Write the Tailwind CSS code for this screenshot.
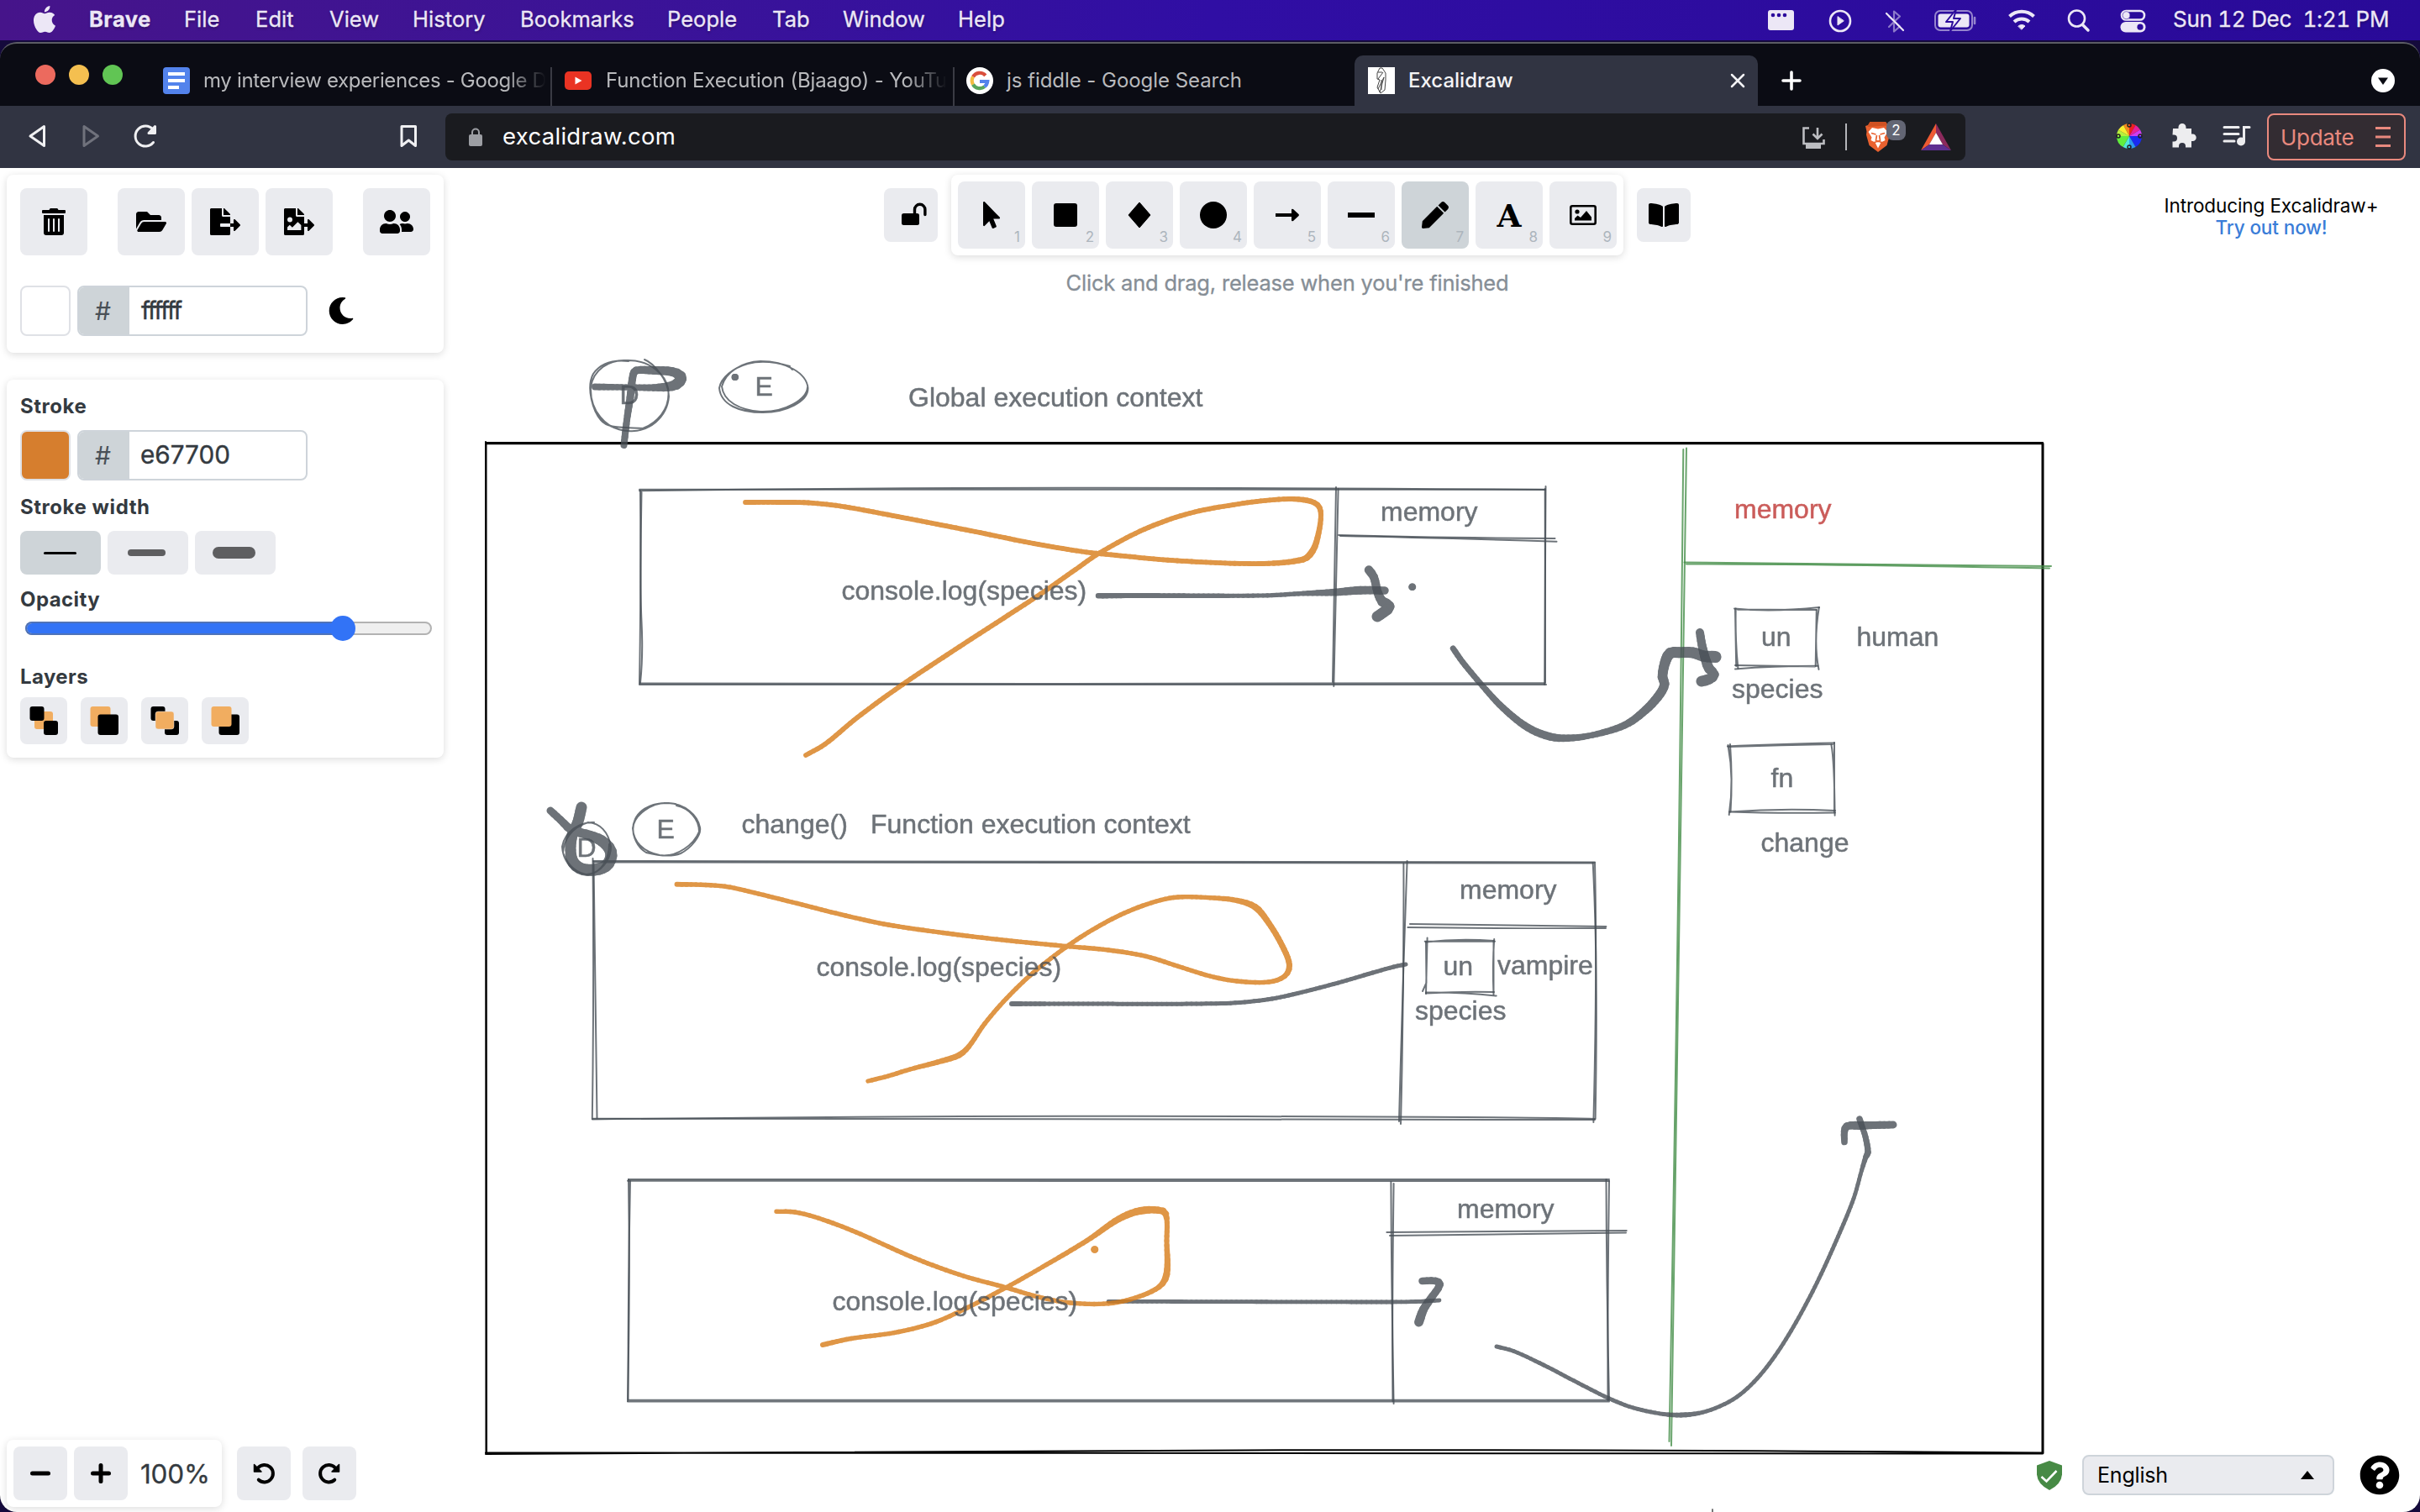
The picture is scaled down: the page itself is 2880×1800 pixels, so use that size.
<!DOCTYPE html>
<html lang="en">
<head>
<meta charset="utf-8">
<title>Excalidraw</title>
<script src="https://cdn.jsdelivr.net/npm/@tailwindcss/browser@4"></script>
</head>
<body class="w-[2880px] h-[1800px] overflow-hidden bg-[#140a26] font-[Inter,sans-serif] antialiased flex flex-col">

<!-- macOS menu bar -->
<header class="relative h-12 shrink-0 flex items-center justify-between bg-linear-to-r from-[#46148a] via-[#300ea4] to-[#290a98] text-[#ece7f6] text-[25.5px] leading-[46px] [text-shadow:0_2px_3px_rgba(0,0,0,.3)]">
  <nav class="flex items-center h-full pb-[2px] whitespace-nowrap tracking-[0.05px] [-webkit-text-stroke:0.3px_#ece7f6]">
    <div class="w-[106px] pl-[37px]"><svg class="w-8 h-8" viewBox="0 0 24 24" fill="#ece7f6"><path d="M12.152 6.896c-.948 0-2.415-1.078-3.96-1.04-2.04.027-3.91 1.183-4.961 3.014-2.117 3.675-.546 9.103 1.519 12.09 1.013 1.454 2.208 3.09 3.792 3.039 1.52-.065 2.09-.987 3.935-.987 1.831 0 2.35.987 3.96.948 1.637-.026 2.676-1.48 3.676-2.948 1.156-1.688 1.636-3.325 1.662-3.415-.039-.013-3.182-1.221-3.22-4.857-.026-3.04 2.48-4.494 2.597-4.559-1.429-2.09-3.623-2.324-4.39-2.376-2-.156-3.675 1.09-4.61 1.09zM15.53 3.83c.843-1.012 1.4-2.427 1.245-3.83-1.207.052-2.662.805-3.532 1.818-.78.896-1.454 2.338-1.273 3.714 1.338.104 2.715-.688 3.559-1.701"/></svg></div>
    <span class="w-[113px] font-bold tracking-[0.5px]">Brave</span>
    <span class="w-[85px]">File</span>
    <span class="w-[88px]">Edit</span>
    <span class="w-[99px]">View</span>
    <span class="w-[128px]">History</span>
    <span class="w-[175px]">Bookmarks</span>
    <span class="w-[125px]">People</span>
    <span class="w-[84px]">Tab</span>
    <span class="w-[137px]">Window</span>
    <span>Help</span>
  </nav>
  <div class="flex items-center h-full pb-[2px] pr-[36px]">
    <svg class="w-[482px] h-[46px]" viewBox="2104 0 482 46" fill="none" stroke="#ece7f6" stroke-width="2.6" stroke-linecap="round" stroke-linejoin="round">
      <rect x="2104" y="12" width="31" height="24" rx="3" fill="#ece7f6" stroke="none"/>
      <g fill="#2c0b9c" stroke="none"><circle cx="2110" cy="18" r="2.3"/><circle cx="2117" cy="18" r="2.3"/><circle cx="2124" cy="18" r="2.3"/></g>
      <circle cx="2190" cy="25" r="12"/><path d="M2187 20v10l7-5z" fill="#ece7f6" stroke-width="1"/>
      <g stroke-width="2.2"><path d="M2248 19.500l13 12-7 6v-24l7 6-6 5.500M2248 32l5-5" opacity=".5"/><path d="M2245 16l20 20"/></g>
      <rect x="2303" y="13" width="44" height="23" rx="6" stroke-width="2" opacity=".55"/>
      <rect x="2306.500" y="16.500" width="37" height="16" rx="3" fill="#ece7f6" stroke="none"/>
      <path d="M2350 21v7" opacity=".55"/>
      <path d="M2328 11l-12 15h8l-3 11 12-15h-8z" fill="#ece7f6" stroke="#2c0b9c" stroke-width="2"/>
      <g stroke-width="4" stroke-linecap="butt"><path d="M2391.500 19.500a21 21 0 0 1 29 0"/><path d="M2397 26a13 13 0 0 1 18 0"/></g>
      <path d="M2402 31a6 6 0 0 1 8 0l-4 4z" fill="#ece7f6" stroke-width="1"/>
      <circle cx="2471.500" cy="22" r="9.500"/><path d="M2478.500 29.500l6.500 6.500" stroke-width="3.500"/>
      <rect x="2525" y="13" width="27" height="10.500" rx="5.200" stroke-width="2.600"/><circle cx="2530.500" cy="18.200" r="4.500" fill="#ece7f6" stroke="#2c0b9c" stroke-width="0.500"/>
      <rect x="2523.500" y="26" width="30" height="12.500" rx="6.200" fill="#ece7f6" stroke="none"/><circle cx="2547" cy="32.200" r="3.600" fill="#2c0b9c" stroke="none"/>
    </svg>
    <span class="w-[258px] whitespace-pre text-[26px] tabular-nums tracking-[-0.28px] [-webkit-text-stroke:0.3px_#ece7f6]">Sun 12 Dec  1:21 PM</span>
  </div>
</header>

<!-- Browser window -->
<main class="relative flex-1 flex flex-col bg-[#150a3c]">
<div class="mt-[2px] flex-1 flex flex-col rounded-[20px] overflow-hidden bg-[#0b0c14] border-t-2 border-[#5c5d64]">

  <!-- Tab strip -->
  <div class="h-[74px] shrink-0 flex items-end pb-0">
    <div class="h-[74px] w-[178px] pl-[42px] flex items-center gap-4 shrink-0">
      <i class="size-6 rounded-full bg-[#ec6a5e]"></i><i class="size-6 rounded-full bg-[#f4bf50]"></i><i class="size-6 rounded-full bg-[#61c554]"></i>
    </div>
    <div class="h-[60px] w-[479px] shrink-0 flex items-center pl-4 relative text-[#b9babd] text-[24px]">
      <svg class="size-8 shrink-0" viewBox="0 0 32 32"><rect width="32" height="32" rx="4" fill="#5383ec"/><path d="M6 6h20v4H6zM6 14h20v4H6zM6 22h13v4H6z" fill="#fff"/></svg>
      <span class="ml-4 whitespace-nowrap tracking-[-0.33px] [mask-image:linear-gradient(to_right,#000_88%,transparent)]">my interview experiences - Google D</span>
      <i class="absolute right-0 bottom-0 w-[2px] h-[46px] bg-[#3a3b44]"></i>
    </div>
    <div class="h-[60px] w-[479px] shrink-0 flex items-center pl-[15px] relative text-[#b9babd] text-[24px]">
      <svg class="w-8 h-[22px] shrink-0" viewBox="0 0 32 22"><rect width="32" height="22" rx="5" fill="#ea3323"/><path d="M12.500 6.500v9l8-4.500z" fill="#fff"/></svg>
      <span class="ml-[17px] whitespace-nowrap tracking-[-0.15px] [mask-image:linear-gradient(to_right,#000_88%,transparent)]">Function Execution (Bjaago) - YouTu</span>
      <i class="absolute right-0 bottom-0 w-[2px] h-[46px] bg-[#3a3b44]"></i>
    </div>
    <div class="h-[60px] w-[476px] shrink-0 flex items-center pl-[14px] text-[#b9babd] text-[24px]">
      <svg class="size-8 shrink-0" viewBox="0 0 32 32" fill="none" stroke-width="4.200"><circle cx="16" cy="16" r="16" fill="#fff"/>
        <path d="M22.800 9.800a9.200 9.200 0 0 0-14.800 1.600" stroke="#d94f3d"/><path d="M8 11.400a9.200 9.200 0 0 0 0 9.200" stroke="#f2bc42"/><path d="M8 20.600a9.200 9.200 0 0 0 13.700 2.600" stroke="#58a55c"/><path d="M21.700 23.200a9.200 9.200 0 0 0 3.500-6.200H16" stroke="#5383ec"/></svg>
      <span class="ml-4 whitespace-nowrap tracking-[-0.05px]">js fiddle - Google Search</span>
    </div>
    <div class="h-[60px] w-[480px] shrink-0 flex items-center pl-4 pr-[14px] rounded-t-[10px] bg-[#313442] text-[#f4f4f6] text-[24px]">
      <svg class="size-8 shrink-0" viewBox="0 0 32 32" fill="none" stroke="#444" stroke-width="1"><rect width="32" height="32" fill="#fff" stroke="none"/><path d="M14 1l-3 6v7l3 1-3 9 4 7 5-4 1-12v-8l-4-6zM12 6h5M12 14l6-8M12 26l7-14M14 30l5-18M16 15v12"/></svg>
      <span class="ml-[16px] flex-1 font-medium">Excalidraw</span>
      <svg class="size-5" viewBox="0 0 20 20" stroke="#f4f4f6" stroke-width="2.500" stroke-linecap="round"><path d="M3 3l14 14M17 3L3 17"/></svg>
    </div>
    <div class="h-[60px] flex-1 flex items-center justify-between pl-7 pr-[30px]">
      <svg class="size-6" viewBox="0 0 24 24" stroke="#fff" stroke-width="3.600" stroke-linecap="round"><path d="M12 2v20M2 12h20"/></svg>
      <svg class="size-7" viewBox="0 0 28 28"><circle cx="14" cy="14" r="14" fill="#fff"/><path d="M8 10.500h12l-6 8.500z" fill="#0b0c14"/></svg>
    </div>
  </div>

  <!-- Address bar -->
  <div class="h-[74px] shrink-0 bg-[#313442] flex items-center pt-0">
    <svg class="w-[530px] h-[74px] shrink-0" viewBox="0 126 530 74" fill="none" stroke="#f0f0f2" stroke-width="3" stroke-linejoin="round" stroke-linecap="round">
      <path d="M52.500 150.500v23L36 162z"/><path d="M100 150.500v23l16.500-11.500z" stroke="#70727c"/>
      <path d="M182.500 169.500a12 12 0 1 1-.5-15.500"/><path d="M184.500 150.500v8h-7.500z" fill="#f0f0f2"/>
      <path d="M478 150.500h16.500v23l-8.200-6.500-8.300 6.500z"/>
    </svg>
    <div class="h-14 w-[1809px] shrink-0 rounded-lg bg-[#1a1b1f] flex items-center justify-between pl-[28px] pr-[17px]">
      <div class="flex items-center">
        <svg class="w-4 h-[22px]" viewBox="0 0 16 22"><rect y="8" width="16" height="14" rx="2" fill="#9c9ea3"/><path d="M4 9V5.500a4 4 0 0 1 8 0V9" fill="none" stroke="#9c9ea3" stroke-width="2"/></svg>
        <span class="ml-6 text-white text-[27.5px] tracking-[0.3px]">excalidraw.com</span>
      </div>
      <svg class="w-[178px] h-[56px]" viewBox="2144 134 178 56" fill="none">
        <path d="M2153 151.500h-6.500v18.500h24v-5M2163 151v12M2157.500 158.500l5.500 5.500 5.500-5.500" stroke="#bcbdc1" stroke-width="2.600"/><path d="M2149 171h18v5h-18z" fill="#bcbdc1"/>
        <path d="M2197 146v32" stroke="#b4b5b9" stroke-width="2"/>
        <path d="M2225.500 144h18.500l3 4 3 1-1.500 6.500.5 4-3.500 12.500-10.500 8-10.500-8-3.500-12.500.5-4-1.500-6.500 3-1z" fill="#e9612f"/><path d="M2225.500 144h18.500l2.500 4.500-24 1.500z" fill="#cf5122"/>
        <path d="M2228 151l7 1.500 7-1.500 4.500 5-4 6.500 1 3.500-5 2.500-3.500 7-3.500-7-5-2.500 1-3.500-4-6.500z" fill="#fff"/>
        <path d="M2227 157.500l5.500 1.500M2243 157.500l-5.500 1.500M2233.500 160l-1 6 2.500 1.500 2.500-1.500-1-6M2229.500 169l5.500-2 5.500 2" stroke="#e9612f" stroke-width="1.700"/>
        <rect x="2245" y="142" width="23" height="24" rx="8" fill="#636674"/><text x="2256.500" y="160" text-anchor="middle" font-size="17" fill="#fff">2</text>
        <path d="M2304 146l-18 32 10-7 8-14z" fill="#ee5a33"/><path d="M2304 146l18 32-10-7-8-14z" fill="#8c2a5c"/><path d="M2286 178h36l-10-7h-16z" fill="#5e2f91"/><path d="M2304 157l-8 14h16z" fill="#fff"/>
      </svg>
    </div>
    <svg class="w-[359px] h-[74px] shrink-0" viewBox="2339 126 359 74">
      <g transform="translate(2534 162)">
        <path d="M0 0L-7-13A15 15 0 0 1 0-15z" fill="#f48a1c"/><path d="M0 0V-15A15 15 0 0 1 7.500-13z" fill="#f02020"/><path d="M0 0L7.500-13A15 15 0 0 1 13-7.500z" fill="#e8209a"/><path d="M0 0L13-7.500A15 15 0 0 1 15 0z" fill="#cf3df0"/><path d="M0 0H15A15 15 0 0 1 7.500 13z" fill="#1b2af0"/><path d="M0 0L7.500 13A15 15 0 0 1 0 15z" fill="#2c9af0"/><path d="M0 0V15A15 15 0 0 1-7.500 13z" fill="#50e8d8"/><path d="M0 0L-7.500 13A15 15 0 0 1-15 0z" fill="#62ee3c"/><path d="M0 0H-15A15 15 0 0 1-13-7.500z" fill="#b6f03c"/><path d="M0 0L-13-7.500A15 15 0 0 1-7-13z" fill="#f6ee30"/>
        <g fill="none" stroke="#222" stroke-width="1.500"><circle cy="-13" r="2"/><circle cy="13" r="2"/><circle cx="-13" r="2"/><circle cx="13" r="2"/></g>
      </g>
      <path d="M2586 153h6.500v-1.500a4.500 4.500 0 0 1 9 0v1.500h6.500v6.500h1.500a4.200 4.200 0 0 1 0 8.500h-1.500v7.500h-7v-1.500a4 4 0 0 0-8 0v1.500h-7.500v-7h1.500a4 4 0 0 0 0-8h-1.500z" fill="#ededef"/>
      <g stroke="#ededef" stroke-width="3" fill="none" stroke-linecap="round"><path d="M2647 151.500h17M2647 159.500h17M2647 168h12M2670.500 168v-16.500h6.500"/><circle cx="2667" cy="168.500" r="3.500" fill="#ededef"/></g>
    </svg>
    <div class="h-14 w-[165px] shrink-0 rounded-lg border-2 border-[#e9897e] bg-[#332c32] text-[#e9897e] flex items-center pl-[14px] gap-[24px]">
      <span class="text-[26px] w-[89px] tracking-[-0.3px]">Update</span>
      <svg class="w-[18px] h-[26px]" viewBox="0 0 18 26" stroke="#e9897e" stroke-width="3"><path d="M0 2.500h18M0 13h18M0 23.500h18"/></svg>
    </div>
  </div>

  <!-- Excalidraw -->
  <section class="relative h-[1600px] bg-white overflow-hidden">
    <svg id="board" class="absolute inset-0 w-[2880px] h-[1600px]" viewBox="0 200 2880 1600" fill="none" stroke-linecap="round" stroke-linejoin="round">
      <!-- outer frame -->
      <g stroke="#000" stroke-width="2">
        <path d="M578 527Q1500 526.500 2431 527M579 528.300H2430" /><path d="M2430.500 527V1730M2431.500 528V1730"/>
        <path d="M578 1731Q1100 1728 1480 1726.500T2431 1729.500M578 1729.500Q1500 1731 2431 1730.500"/><path d="M578 526Q580 1100 578.500 1730M578.500 528Q579.500 1200 579 1730"/>
      </g>
      <!-- green dividers -->
      <g stroke="#438d47" stroke-opacity=".8" stroke-width="2">
        <path d="M2003.300 535Q1997.700 1120 1986.500 1716"/><path d="M2007 533.500Q1996 1120 1989 1721"/>
        <path d="M2004.500 669.500Q2240 672 2441 674"/><path d="M2007 671.500Q2200 672 2439 676.500"/>
      </g>
      <!-- sketched boxes -->
      <g stroke="#495057" stroke-opacity=".8" stroke-width="2">
        <path d="M761 584.200Q1200 578 1839 583"/><path d="M761 582.800H1839"/><path d="M762 584Q763 700 761 814"/><path d="M763.500 586Q761.500 700 763.500 740T762 813"/><path d="M761 815Q1300 814 1840 815"/><path d="M762 813.500Q1300 814.500 1838 813.200"/><path d="M1839.500 579L1838.200 815"/><path d="M1838.700 582L1839 813"/>
        <path d="M1590 580L1586 812"/><path d="M1592.600 582L1587.300 817"/><path d="M1593 637Q1700 640 1850.500 641"/><path d="M1595 638Q1700 640 1852.500 644.700"/>
        <path d="M706 1025Q1300 1027.500 1898 1026.500"/><path d="M708 1026.500Q1300 1025.500 1896 1027.500"/><path d="M705.500 1022Q707 1180 704.800 1332"/><path d="M706.500 1026Q709 1180 710.500 1331"/><path d="M705 1332.500Q1100 1328 1480 1329T1898 1332"/><path d="M706 1331.800Q1300 1333.500 1898 1333"/><path d="M1895.700 1027Q1902 1150 1898.600 1332"/><path d="M1898 1027Q1901 1150 1896.400 1336"/>
        <path d="M1670.400 1028Q1671 1180 1667 1338"/><path d="M1674.600 1025Q1669 1180 1665 1335"/><path d="M1678 1100L1911.400 1103"/><path d="M1675.400 1104Q1800 1105.500 1911 1105"/>
        <path d="M748 1404H1915"/><path d="M747 1405.800Q1300 1405 1915 1406"/><path d="M748 1404Q750 1530 747 1668"/><path d="M750 1406Q747.500 1530 747.500 1666"/><path d="M747 1668.500Q1300 1667 1915 1668.500"/><path d="M748 1666.800H1914"/><path d="M1911.500 1404Q1912 1540 1915 1667"/><path d="M1915 1406Q1913 1540 1913.500 1667"/>
        <path d="M1655.400 1407Q1656 1540 1658.600 1671"/><path d="M1658.600 1409Q1656.500 1560 1657.500 1668"/><path d="M1650.400 1467Q1800 1465.500 1935.700 1465"/><path d="M1654 1471Q1800 1469.500 1935 1467.500"/>
        <path d="M2064 724.600Q2110 729 2165 723M2068 725.800Q2120 725.500 2161.500 726"/><path d="M2164.800 723Q2158 765 2164.500 797M2161.800 726L2160.700 793"/><path d="M2065 796.400Q2110 793 2163.300 792.800M2065 792L2160 793.600"/><path d="M2065.700 724.500Q2065 765 2068.400 795.700M2065 725.500L2066.200 793"/>
        <path d="M2056 888.600Q2110 886 2183 884.600M2058 889Q2120 887 2181 886"/><path d="M2056.500 887Q2064 928 2057.700 970M2059 886Q2062 928 2059.500 966.500"/><path d="M2179.400 886.500Q2183 905 2183.600 970.700M2183 884V967"/><path d="M2058 966.400Q2120 962 2184 965M2058 966.400Q2110 968.500 2184 967.500"/>
        <path d="M1695.700 1120.800H1779M1697 1121.500Q1735 1117 1778 1120"/><path d="M1778.200 1118Q1776 1150 1777.500 1184M1777.500 1120V1183"/><path d="M1697 1182.500Q1740 1180 1778 1181M1697 1181.500Q1740 1181 1780.700 1185.500"/><path d="M1698.600 1116.600L1697 1183M1697 1121L1697.500 1170 1693 1180"/>
      </g>
      <!-- sketched ellipses -->
      <g stroke="#495057" stroke-opacity=".8" stroke-width="2">
        <path d="M767 428C777 432 796 452 796 472C794 497 772 515 748 513C720 512 702 488 703 461C706 440 725 428 745 429C776 428 792 448 795 462C799 488 780 504 765 510C742 508 724 511 715 500C706 490 697 462 706 445C715 432 730 428 748 430"/>
        <path d="M940 436C920 430 905 429 890 433C872 438 858 450 856 462C858 482 880 491 908 491C935 491 962 478 961.500 462C960 444 935 430 905 430C882 431 864 443 859 460C861 478 880 488 905 490C935 491 960 475 961 461M941 438L943 440"/>
        <path d="M804 957C780 953 762 962 756 975C749 990 757 1008 769 1015C785 1019 800 1020 810 1016C822 1010 835 995 833 985C830 970 815 957 795 956C775 955 755 970 753 986C754 1002 765 1014 785 1018C806 1021 826 1005 832 990C832 975 820 962 805 959"/>
        <path d="M707 979C690 978 672 990 669 1008C670 1025 682 1040 698 1041C716 1040 727 1022 727 1008C724 990 714 980 700 979C680 985 671 1000 670 1015C676 1032 688 1040 700 1041.500C718 1038 725 1020 725 1005"/>
      </g>
      <g id="ink"></g>
      <g font-family="'Liberation Sans', Arial, sans-serif" font-size="32" fill="#495057" opacity=".8" stroke="#495057" stroke-width="0.500">
        <text x="737.500" y="480.500">D</text><text x="898.500" y="471">E</text><text x="1081" y="484">Global execution context</text>
        <text x="1001.500" y="714">console.log(species)</text><text x="1643" y="620">memory</text>
        <text x="2064" y="616.500" fill="#be3431" stroke="#be3431">memory</text>
        <text x="2096" y="769">un</text><text x="2209.500" y="769">human</text><text x="2061" y="830.500">species</text><text x="2107.500" y="937">fn</text><text x="2095.500" y="1014">change</text>
        <text x="781.500" y="998">E</text><text x="686.500" y="1020">D</text><text x="882.500" y="991.500">change()</text><text x="1036" y="991.500">Function execution context</text>
        <text x="971.500" y="1162">console.log(species)</text><text x="990.500" y="1560">console.log(species)</text>
        <text x="1737" y="1069.500">memory</text><text x="1717.500" y="1160.500">un</text><text x="1782" y="1159.500">vampire</text><text x="1684" y="1214">species</text><text x="1734" y="1449.500">memory</text>
      </g>
      <path d="M2038 1797v4" stroke="#777" stroke-width="2"/>
    </svg>

    <!-- Interface over the canvas -->
    <div class="absolute inset-0 flex flex-col justify-between px-2 pt-2 pb-[6px]">
      <div class="flex items-start">
        <div class="w-[520px] shrink-0 flex flex-col gap-8">
          <div class="h-[212px] rounded-lg bg-white shadow-[0_2px_10px_rgba(0,0,0,.14)] p-4">
            <div class="flex">
              <button class="size-20 rounded-lg bg-[#eaebef] grid place-items-center"><svg class="w-7 h-8" viewBox="0 0 448 512"><path d="M32 464a48 48 0 0 0 48 48h288a48 48 0 0 0 48-48V128H32zm272-256a16 16 0 0 1 32 0v224a16 16 0 0 1-32 0zm-96 0a16 16 0 0 1 32 0v224a16 16 0 0 1-32 0zm-96 0a16 16 0 0 1 32 0v224a16 16 0 0 1-32 0zM432 32H312l-9.400-18.700A24 24 0 0 0 281.100 0H166.800a23.720 23.720 0 0 0-21.400 13.300L136 32H16A16 16 0 0 0 0 48v32a16 16 0 0 0 16 16h416a16 16 0 0 0 16-16V48a16 16 0 0 0-16-16z"/></svg></button>
              <button class="ml-9 size-20 rounded-lg bg-[#eaebef] grid place-items-center"><svg class="w-9 h-8" viewBox="0 0 576 512"><path d="M572.694 292.093L500.270 416.248A63.997 63.997 0 0 1 444.989 448H45.025c-18.523 0-30.064-20.093-20.731-36.093l72.424-124.155A64 64 0 0 1 152 256h399.964c18.523 0 30.064 20.093 20.730 36.093zM152 224h328v-48c0-26.510-21.490-48-48-48H272l-64-64H48C21.490 64 0 85.490 0 112v278.046l69.077-118.418C86.214 242.250 117.989 224 152 224z"/></svg></button>
              <button class="ml-2 size-20 rounded-lg bg-[#eaebef] grid place-items-center"><svg class="w-9 h-8" viewBox="0 0 576 512"><path d="M384 121.900c0-6.300-2.500-12.400-7-16.900L279.100 7c-4.500-4.500-10.600-7-17-7H256v128h128zM571 308l-95.700-96.400c-10.100-10.100-27.400-3-27.400 11.300V288h-64v64h64v65.200c0 14.300 17.300 21.400 27.400 11.300L571 332c6.600-6.600 6.600-17.400 0-24zm-379 28v-32c0-8.800 7.200-16 16-16h176V160H248c-13.200 0-24-10.800-24-24V0H24C10.700 0 0 10.700 0 24v464c0 13.300 10.700 24 24 24h336c13.300 0 24-10.700 24-24V352H208c-8.800 0-16-7.200-16-16z"/></svg></button>
              <button class="ml-2 size-20 rounded-lg bg-[#eaebef] grid place-items-center"><svg class="w-9 h-8" viewBox="0 0 576 512"><path d="M384 121.900c0-6.300-2.500-12.400-7-16.900L279.100 7c-4.500-4.500-10.600-7-17-7H256v128h128z"/><path fill-rule="evenodd" d="M571 308l-95.700-96.400c-10.100-10.100-27.400-3-27.400 11.300V288h-64V160H248c-13.200 0-24-10.800-24-24V0H24C10.700 0 0 10.700 0 24v464c0 13.300 10.700 24 24 24h336c13.300 0 24-10.700 24-24V352h64v65.200c0 14.300 17.300 21.400 27.400 11.300L571 332c6.600-6.600 6.600-17.400 0-24zM112 168a48 48 0 1 1 0 96 48 48 0 1 1 0-96zM64 416v-56l44-44 50 46 104-104 64 62v96z"/></svg></button>
              <button class="ml-9 size-20 rounded-lg bg-[#eaebef] grid place-items-center"><svg class="w-10 h-8" viewBox="0 0 640 512"><path d="M192 256c61.900 0 112-50.100 112-112S253.900 32 192 32 80 82.100 80 144s50.100 112 112 112zm76.800 32h-8.300c-20.800 10-43.900 16-68.500 16s-47.600-6-68.500-16h-8.300C51.600 288 0 339.600 0 403.200V432c0 26.500 21.500 48 48 48h288c26.500 0 48-21.500 48-48v-28.800c0-63.600-51.600-115.200-115.200-115.200zM480 256c53 0 96-43 96-96s-43-96-96-96-96 43-96 96 43 96 96 96zm48 32h-3.800c-13.900 4.800-28.600 8-44.200 8s-30.300-3.200-44.200-8H432c-20.400 0-39.200 5.900-55.700 15.400 24.400 26.300 39.700 61.200 39.700 99.800v38.400c0 2.200-.5 4.300-.6 6.400H592c26.500 0 48-21.500 48-48 0-61.900-50.100-112-112-112z"/></svg></button>
            </div>
            <div class="mt-9 flex items-center">
              <i class="size-[60px] rounded-lg border-2 border-[#dfe1e6] bg-white"></i>
              <div class="ml-2 w-[274px] h-[60px] flex rounded-lg border-2 border-[#ced4da] bg-white overflow-hidden text-[29.5px] leading-[54px]">
                <span class="w-[60px] pr-[3px] bg-[#ced4d8] text-center text-[#495057] text-[30px] leading-[57px]">#</span><span class="pl-[14px] text-[#343a40] tracking-[-2.1px] [-webkit-text-stroke:0.4px_#343a40]">ffffff</span>
              </div>
              <svg class="ml-6 size-8" viewBox="0 0 512 512"><path d="M283.211 512c78.962 0 151.079-35.925 198.857-94.792 7.068-8.708-.639-21.430-11.562-19.350-124.203 23.654-238.262-71.576-238.262-196.954 0-72.222 38.662-138.635 101.498-174.394 9.686-5.512 7.250-20.197-3.756-22.230A258.156 258.156 0 0 0 283.211 0c-141.309 0-256 114.511-256 256 0 141.309 114.511 256 256 256z"/></svg>
            </div>
          </div>

          <div class="h-[450px] rounded-lg bg-white shadow-[0_2px_10px_rgba(0,0,0,.14)] px-4 pt-4 flex flex-col text-[#343a40]">
            <h3 class="h-11 text-[24px] tracking-[0.55px] leading-[32px] font-bold">Stroke</h3>
            <div class="flex">
              <i class="size-[60px] rounded-lg border-2 border-[#dfe1e6] bg-[#d67e2e]"></i>
              <div class="ml-2 w-[274px] h-[60px] flex rounded-lg border-2 border-[#ced4da] bg-white overflow-hidden text-[29.7px] leading-[54px]">
                <span class="w-[60px] pr-[3px] bg-[#ced4d8] text-center text-[#495057] text-[30px] leading-[57px]">#</span><span class="pl-[13px] [-webkit-text-stroke:0.4px_#343a40]">e67700</span>
              </div>
            </div>
            <h3 class="mt-[16px] h-[44px] text-[24px] tracking-[0.55px] leading-[32px] font-bold">Stroke width</h3>
            <div class="flex gap-2">
              <button class="w-24 h-[52px] rounded-lg bg-[#ced4d8] grid place-items-center"><i class="block w-[39px] h-[3px] mr-px rounded-full bg-black"></i></button>
              <button class="w-24 h-[52px] rounded-lg bg-[#eaebef] grid place-items-center"><i class="block w-[45px] h-[8px] mr-[3px] rounded-full bg-[#5e5e60]"></i></button>
              <button class="w-24 h-[52px] rounded-lg bg-[#eaebef] grid place-items-center"><i class="block w-[51px] h-[14px] mr-[3px] rounded-full bg-[#5e5e60]"></i></button>
            </div>
            <h3 class="mt-[14px] h-[35px] text-[24px] tracking-[0.4px] leading-[32px] font-bold">Opacity</h3>
            <div class="relative ml-[6px] w-[484px] h-[30px] flex items-center">
              <div class="w-full h-4 rounded-full bg-[#efefef] border-2 border-[#b2b2b2] flex overflow-hidden"><i class="block w-[376px] bg-[#3273f6]"></i></div>
              <i class="absolute left-0 w-[380px] h-4 rounded-l-full border-2 border-r-0 border-[#4f73b8]"></i>
              <i class="absolute left-[363px] size-[30px] rounded-full bg-[#3273f6]"></i>
            </div>
            <h3 class="mt-[27px] h-[40px] text-[24px] tracking-[0.4px] leading-[32px] font-bold">Layers</h3>
            <div class="flex gap-4">
              <button class="size-14 rounded-lg bg-[#eaebef]"><svg class="size-14" viewBox="0 0 56 56"><rect x="17" y="17" width="22" height="21" rx="3" fill="#f1ad60"/><rect x="11.500" y="11" width="17" height="17" rx="3"/><rect x="28" y="28" width="17" height="17" rx="3"/></svg></button>
              <button class="size-14 rounded-lg bg-[#eaebef]"><svg class="size-14" viewBox="0 0 56 56"><rect x="11.500" y="11" width="24" height="24" rx="3" fill="#f1ad60"/><rect x="20.500" y="20.500" width="24.500" height="24.500" rx="3"/></svg></button>
              <button class="size-14 rounded-lg bg-[#eaebef]"><svg class="size-14" viewBox="0 0 56 56"><rect x="11.500" y="11" width="17" height="17" rx="3"/><rect x="28" y="28" width="17" height="17" rx="3"/><rect x="17" y="17" width="22" height="21" rx="3" fill="#f1ad60" stroke="#eaebef" stroke-width="0.500"/></svg></button>
              <button class="size-14 rounded-lg bg-[#eaebef]"><svg class="size-14" viewBox="0 0 56 56"><rect x="20.500" y="20.500" width="24.500" height="24.500" rx="3"/><rect x="11.500" y="11" width="24" height="24" rx="3" fill="#f1ad60"/></svg></button>
            </div>
          </div>
        </div>

        <div class="ml-[524px] w-[960px] shrink-0 flex flex-col items-center">
          <div class="flex items-center gap-4">
            <button class="size-16 rounded-lg bg-[#eaebef] grid place-items-center"><svg class="w-8 h-8 ml-[8px]" viewBox="0 0 32 32" fill="none" stroke="#000" stroke-width="3.400"><rect x="1" y="14" width="21" height="14" rx="2.500" fill="#000" stroke="none"/><path d="M16.500 14V9.500a6.200 6.200 0 0 1 12.400 0V15.500" stroke-linecap="round"/></svg></button>
            <div class="h-24 w-[800px] rounded-lg bg-white shadow-[0_2px_10px_rgba(0,0,0,.14)] p-2 flex gap-2 text-[17px] leading-[16px] text-[#adb5bd]">
              <button class="relative size-20 rounded-lg bg-[#eaebef] grid place-items-center"><svg class="w-5 h-8" viewBox="0 0 320 512"><path d="M302.189 329.126H196.105l55.831 135.993c3.889 9.428-.555 19.999-9.444 23.999l-49.165 21.427c-9.165 4-19.443-.571-23.332-9.714l-53.053-129.136-86.664 89.138C18.729 472.710 0 463.554 0 447.977V18.299C0 1.899 19.921-6.096 30.277 5.443l284.412 292.542c11.472 11.179 3.007 31.141-12.500 31.141z"/></svg><span class="absolute right-[6px] bottom-[6px]">1</span></button>
              <button class="relative size-20 rounded-lg bg-[#eaebef] grid place-items-center"><i class="block size-7 rounded-[3px] bg-black"></i><span class="absolute right-[6px] bottom-[6px]">2</span></button>
              <button class="relative size-20 rounded-lg bg-[#eaebef] grid place-items-center"><svg class="w-7 h-8" viewBox="0 0 28 32"><path d="M14 1L27 16 14 31 1 16z" stroke="#000" stroke-linejoin="round"/></svg><span class="absolute right-[6px] bottom-[6px]">3</span></button>
              <button class="relative size-20 rounded-lg bg-[#eaebef] grid place-items-center"><i class="block size-8 rounded-full bg-black"></i><span class="absolute right-[6px] bottom-[6px]">4</span></button>
              <button class="relative size-20 rounded-lg bg-[#eaebef] grid place-items-center"><svg class="w-7 h-4" viewBox="0 0 28 16"><path d="M0 6h19V2q0-2 2-1l6.500 6q.8 1 0 2L21 15q-2 1-2-1v-4H0z"/></svg><span class="absolute right-[6px] bottom-[6px]">5</span></button>
              <button class="relative size-20 rounded-lg bg-[#eaebef] grid place-items-center"><i class="block w-8 h-[6px] bg-black"></i><span class="absolute right-[6px] bottom-[6px]">6</span></button>
              <button class="relative size-20 rounded-lg bg-[#ced4d8] grid place-items-center"><svg class="size-8" viewBox="0 0 512 512"><path d="M290.740 93.240l128.020 128.020-277.990 277.990-114.140 12.600C11.350 513.540-1.560 500.620.14 485.340l12.700-114.220 277.900-277.880zm207.200-19.060l-60.110-60.110c-18.750-18.750-49.160-18.750-67.910 0l-56.550 56.550 128.020 128.020 56.550-56.550c18.750-18.760 18.750-49.160 0-67.910z"/></svg><span class="absolute right-[6px] bottom-[6px]">7</span></button>
              <button class="relative size-20 rounded-lg bg-[#eaebef] grid place-items-center"><svg class="size-14" viewBox="0 0 56 56"><text x="28" y="42" text-anchor="middle" font-family="'DejaVu Serif', serif" font-weight="bold" font-size="38" textLength="29" lengthAdjust="spacingAndGlyphs">A</text></svg><span class="absolute right-[6px] bottom-[6px]">8</span></button>
              <button class="relative size-20 rounded-lg bg-[#eaebef] grid place-items-center"><svg class="w-8 h-6" viewBox="0 0 32 24"><rect x="1.300" y="1.300" width="29.400" height="21.400" rx="2" fill="none" stroke="#000" stroke-width="2.600"/><circle cx="9" cy="8" r="2.600"/><path d="M6 18.500v-2.500l3.500-3.500 3.500 2.500 7-8 6 7.500v4z"/></svg><span class="absolute right-[6px] bottom-[6px]">9</span></button>
            </div>
            <button class="size-16 rounded-lg bg-[#eaebef] grid place-items-center"><svg class="w-9 h-8" viewBox="0 0 576 512"><path d="M542.220 32.050c-54.800 3.110-163.720 14.430-230.960 55.590-4.640 2.840-7.270 7.890-7.270 13.170v363.870c0 11.550 12.630 18.850 23.280 13.490 69.180-34.820 169.230-44.320 218.700-46.920 16.890-.89 30.020-14.430 30.020-30.660V62.750c.01-17.710-15.350-31.740-33.770-30.700zM264.730 87.640C197.500 46.480 88.580 35.170 33.780 32.050 15.360 31.010 0 45.040 0 62.750V400.600c0 16.240 13.130 29.780 30.020 30.660 49.490 2.600 149.590 12.110 218.770 46.950 10.620 5.350 23.210-1.940 23.210-13.460V100.630c0-5.290-2.620-10.140-7.270-12.990z"/></svg></button>
          </div>
          <p class="mt-[17px] text-[25.500px] leading-8 text-[#868e96] whitespace-nowrap tracking-[-0.2px] [-webkit-text-stroke:0.3px_#868e96]">Click and drag, release when you're finished</p>
        </div>

        <div class="ml-[537px] w-[308px] pt-6 text-center text-[22.500px] leading-[26px] whitespace-nowrap tracking-[-0.1px]">
          <p class="text-black">Introducing Excalidraw+</p><p class="text-[#3a7dd8] font-medium">Try out now!</p>
        </div>
      </div>

      <div class="flex items-center justify-between">
        <div class="flex items-center">
          <div class="w-64 h-20 rounded-lg bg-white shadow-[0_2px_10px_rgba(0,0,0,.14)] p-2 flex items-center">
            <button class="size-16 rounded-lg bg-[#eaebef] grid place-items-center"><svg class="size-6" viewBox="0 0 24 24" stroke="#000" stroke-width="5" stroke-linecap="round"><path d="M2.500 12h19"/></svg></button>
            <button class="ml-2 size-16 rounded-lg bg-[#eaebef] grid place-items-center"><svg class="size-6" viewBox="0 0 24 24" stroke="#000" stroke-width="5" stroke-linecap="round"><path d="M2.500 12h19M12 2.500v19"/></svg></button>
            <span class="ml-[15px] text-[31.500px] text-[#343a40] tracking-[-0.2px] pt-[2px] [-webkit-text-stroke:0.3px_#343a40]">100%</span>
          </div>
          <button class="ml-[18px] size-16 rounded-lg bg-[#eaebef] grid place-items-center"><svg class="size-8" viewBox="0 0 32 32" fill="none" stroke="#000" stroke-width="4" stroke-linecap="round"><path d="M9 9.500a10.200 10.200 0 1 1 .8 14.200"/><path d="M4.500 5.500v8.500h8.500z" fill="#000" stroke-width="1.500" stroke-linejoin="round"/></svg></button>
          <button class="ml-[14px] size-16 rounded-lg bg-[#eaebef] grid place-items-center"><svg class="size-8 -scale-x-100" viewBox="0 0 32 32" fill="none" stroke="#000" stroke-width="4" stroke-linecap="round"><path d="M9 9.500a10.200 10.200 0 1 1 .8 14.200"/><path d="M4.500 5.500v8.500h8.500z" fill="#000" stroke-width="1.500" stroke-linejoin="round"/></svg></button>
        </div>
        <div class="flex items-center pr-4 pt-1">
          <svg class="w-[30px] h-[35px]" viewBox="0 0 30 35"><path d="M15 0l15 5.500v11Q29 28 15 35 1 28 0 16.500v-11z" fill="#478a45"/><path d="M5.500 19l6 5.500L23.500 12" fill="none" stroke="#fff" stroke-width="2.600"/></svg>
          <div class="ml-6 w-[300px] h-12 rounded-lg border-2 border-[#ced4da] bg-[#eaebef] flex items-center justify-between pl-[16px] pr-[22px] text-[25px] text-black"><span class="pt-[2px] tracking-[-0.2px]">English</span><svg class="w-4 h-[10px]" viewBox="0 0 16 10"><path d="M8 0l8 10H0z"/></svg></div>
          <svg class="ml-[30px] size-12" viewBox="0 0 512 512"><path d="M504 256c0 136.997-111.043 248-248 248S8 392.997 8 256C8 119.083 119.043 8 256 8s248 111.083 248 248zM262.655 90c-54.497 0-89.255 22.957-116.549 63.758-3.536 5.286-2.353 12.415 2.715 16.258l34.699 26.310c5.205 3.947 12.621 3.008 16.665-2.122 17.864-22.658 30.113-35.797 57.303-35.797 20.429 0 45.698 13.148 45.698 32.958 0 14.976-12.363 22.667-32.534 33.976C247.128 238.528 216 254.941 216 296v4c0 6.627 5.373 12 12 12h56c6.627 0 12-5.373 12-12v-1.333c0-28.462 83.186-29.647 83.186-106.667 0-58.002-60.165-102-116.531-102zM256 338c-25.365 0-46 20.635-46 46 0 25.364 20.635 46 46 46s46-20.636 46-46c0-25.365-20.635-46-46-46z"/></svg>
        </div>
      </div>
    </div>
  </section>
</div>
</main>

<script>
  // Freehand pen strokes: [colour, default width, [x, y, width?] ...]
  const GRAY = '#495057', ORANGE = '#d87c19';
  const strokes = [
    [GRAY, 8, [[708,460.500,8],[745,461,7],[778,461.500,8],[800,459.500,11],[809,454,13],[810,448,13],[800,442.500,11],[778,441,10],[757,441,9],[753.500,446,9],[750,473,9],[746,500,8],[742.500,530,8]]],
    [GRAY, 8, [[874.500,449],[875,449]]],
    [ORANGE, 5.800, [[887,598],[925,598],[962,598.500],[1000,602.500],[1045,610.500],[1161,633],[1225,646],[1287,656.500],[1328,661],[1401,667.500],[1498,671],[1551,666,7],[1562,656,8],[1568,640,7],[1572,613,6],[1568,601,6.500],[1551,595,6.500],[1522,594.500],[1474,600],[1416,611],[1362,630],[1309,658],[1280,678],[1238.600,707],[1141.700,770],[1074,815],[1020.500,854],[981.700,886],[959,899]]],
    [GRAY, 6, [[1307,709.300,6.500],[1350,709,6],[1503,709,5],[1551,706.500,5.500],[1590,705,8.500],[1619,702.700,10],[1648,703,9.500]]],
    [GRAY, 11, [[1629,678.500,11],[1635,687,10],[1639.500,705,10],[1645,716,11],[1653,722,13],[1647,728.500,13],[1639,734,13]]],
    [GRAY, 8.500, [[1680.500,698.700],[1681,698.700]]],
    [GRAY, 7, [[1729.300,772,7],[1740.500,788],[1764.700,817],[1789,843,8],[1818,866,9],[1844.700,877,9.500],[1866.500,878.700,8.500],[1895.600,875,7],[1934,863,8.500],[1958.600,845,10],[1975.600,826,11],[1981,814,11],[1978.500,806,11.500],[1981.500,789,12],[1987.700,777.500,13],[1998,776.800,13],[2015,777,13],[2027,781,13],[2041.600,782,14]]],
    [GRAY, 10, [[2023,753],[2025.500,768],[2030,786,11],[2034,796,12],[2040,803,11],[2034,808.500,12],[2025,811,13]]],
    [GRAY, 12, [[655,965,9],[667,976,9],[680,988,10],[697,993,11],[716,1001,13],[727,1014,14],[724,1028,14],[713,1034.500,14],[694,1035,14],[682.400,1027,14],[679,1012,13],[681,994,13],[687.600,979,13],[692,961,13]]],
    [ORANGE, 5.400, [[805.500,1052.800,6],[834,1053.300],[863,1055.300],[891.600,1061.300],[942.700,1074],[1006.400,1090],[1057.400,1101],[1134,1112],[1198,1119.500],[1268,1126.400],[1319,1131],[1363.600,1138.400],[1402,1150.300],[1440,1162],[1472,1168],[1510,1169],[1529,1162,6],[1534.500,1149,7],[1526,1126,7],[1510,1099,7],[1494,1080,8],[1472,1072,6.500],[1440,1068.700],[1402,1068],[1376,1073],[1338,1087],[1300,1107],[1268,1128],[1229.600,1158],[1197.800,1188.600],[1172,1218.500],[1153,1245.800,6],[1141.600,1256,7],[1121,1263,6.500],[1083,1273],[1057,1281],[1033,1287]]],
    [GRAY, 5, [[1204,1195,6],[1260,1195],[1453,1194.600],[1504,1190.500],[1533.600,1185],[1587,1171.500],[1633.600,1158],[1658.600,1151],[1673,1148]]],
    [GRAY, 4.800, [[1319,1549.300],[1400,1549.500],[1650,1550],[1685,1549.500],[1713,1548]]],
    [GRAY, 9, [[1692.500,1525,8.500],[1708.600,1525,8.500],[1713.500,1529,9],[1705,1542.700,9],[1694,1559,10],[1688.600,1573.900,11]]],
    [ORANGE, 5.400, [[924,1442.300],[946,1443],[974.500,1450.300],[1019,1467],[1089,1498],[1146.700,1519],[1198,1533],[1236,1544],[1274,1551],[1319,1551.800],[1351,1545],[1379.500,1532,6],[1388.400,1517,8],[1388.500,1477,6],[1388.400,1450,6],[1384,1441.800,8],[1357,1441.500,9],[1331.700,1451,8],[1293.400,1477,6],[1236,1511],[1197.800,1532.500],[1146.700,1559],[1108.500,1575.600],[1064,1586.600],[1013,1593.500],[979,1601,6]]],
    [ORANGE, 8.500, [[1302.500,1487.600],[1303,1487.600]]],
    [GRAY, 4.800, [[1781,1603,5],[1801.400,1608.500],[1837,1625],[1873,1643.700],[1914.300,1664.500],[1944,1676],[1980,1683.500],[2006,1684.300,6],[2031,1680],[2062.500,1666],[2087.500,1645],[2112.500,1614],[2137.500,1574],[2162.500,1526.700],[2187.500,1472],[2206,1426.700],[2215.600,1393],[2220.600,1377,6],[2223,1371.700,7.500],[2220,1353.300,7],[2215.600,1340,7],[2213,1332,7.500]]],
    [GRAY, 8, [[2195,1359.500,7.500],[2195,1347,8],[2198,1340.700,9],[2212.500,1340,10],[2232,1339.500,9],[2253,1339,9]]],
  ];
  const NS = 'http://www.w3.org/2000/svg', ink = document.getElementById('ink');
  for (const [colour, base, pts] of strokes) {
    const g = document.createElementNS(NS, 'g');
    g.setAttribute('opacity', '.8');
    g.setAttribute('stroke', colour);
    let prev = null;
    for (let i = 0; i < pts.length - 1; i++) {
      const p0 = pts[i-1] || pts[i], p1 = pts[i], p2 = pts[i+1], p3 = pts[i+2] || p2;
      const w1 = p1[2] || base, w2 = p2[2] || base;
      const len = Math.hypot(p2[0]-p1[0], p2[1]-p1[1]);
      const n = Math.max(2, Math.ceil(len / 6));
      // Hermite tangents scaled to the span, so long straight runs don't overshoot
      const tan = (a, b) => {
        const dx = b[0]-a[0], dy = b[1]-a[1], l = Math.hypot(dx, dy) || 1;
        return [dx / l * len, dy / l * len];
      };
      const m1 = tan(p0, p2), m2 = tan(p1, p3);
      for (let k = prev ? 1 : 0; k <= n; k++) {
        const t = k / n, t2 = t*t, t3 = t2*t;
        const h = [2*t3-3*t2+1, t3-2*t2+t, -2*t3+3*t2, t3-t2];
        const x = h[0]*p1[0] + h[1]*m1[0] + h[2]*p2[0] + h[3]*m2[0];
        const y = h[0]*p1[1] + h[1]*m1[1] + h[2]*p2[1] + h[3]*m2[1];
        if (prev) {
          const l = document.createElementNS(NS, 'line');
          l.setAttribute('x1', prev[0]); l.setAttribute('y1', prev[1]);
          l.setAttribute('x2', x); l.setAttribute('y2', y);
          l.setAttribute('stroke-width', w1 + (w2-w1)*t);
          g.appendChild(l);
        }
        prev = [x, y];
      }
    }
    ink.appendChild(g);
  }
</script>
</body>
</html>
